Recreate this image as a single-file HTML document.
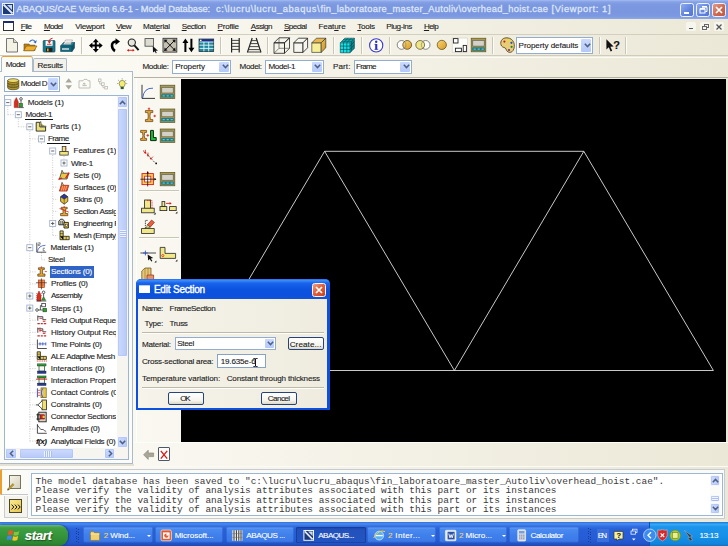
<!DOCTYPE html><html><head><meta charset="utf-8"><title>ABAQUS/CAE</title><style>
*{margin:0;padding:0;box-sizing:border-box}
html,body{width:728px;height:546px;overflow:hidden;background:#ebe8d7}
body{background:linear-gradient(90deg,#fdfcf7,#ebe8d7)}
body{position:relative;font-family:"Liberation Sans","DejaVu Sans",sans-serif;font-size:7.7px;color:#111;line-height:1}
.a{position:absolute;white-space:nowrap}
svg{position:absolute;overflow:visible}
.t{position:absolute;white-space:nowrap;font-size:8.1px;line-height:10px;height:10px;color:#1c1c1c;-webkit-text-stroke:.12px}
.tb{font-weight:bold}
.cb{position:absolute;background:#fff;border:1px solid #93add0}
.cbb{position:absolute;right:1px;top:1px;bottom:1px;width:10px;background:linear-gradient(#cbd9fd,#b4c8f8);border-radius:1px}
.btn{position:absolute;border:1px solid #27437c;border-radius:2px;background:linear-gradient(#ffffff,#f4f3ec 70%,#dcd8c8);}
.sep{position:absolute;width:1px;background:#c9c6b6;box-shadow:1px 0 0 #fcfcf8}
.sb{position:absolute;background:linear-gradient(90deg,#cddafd,#b7c9f8);border:1px solid #f4f7fe;border-radius:2px;box-shadow:0 0 0 .5px #a9bdf0 inset}
.sbh{position:absolute;background:linear-gradient(#cddafd,#b7c9f8);border:1px solid #f4f7fe;border-radius:2px;box-shadow:0 0 0 .5px #a9bdf0 inset}
</style></head><body>
<div class="a" style="left:0px;top:0px;width:728.0px;height:18.5px;background:linear-gradient(#a4bbf0 0%,#86a2e6 10%,#7b98e1 25%,#7a96df 60%,#7c98e0 85%,#8ea8e8 100%)"></div>
<svg style="left:2px;top:3px" width="12" height="12" viewBox="0 0 12 12"><rect width="12" height="12" fill="#eef2fa"/><rect x="1" y="1" width="10" height="10" fill="#1c3a78"/><path d="M1.5 1.5 L10.5 10.5" stroke="#e4ecfa" stroke-width="1.8"/><path d="M5 2 H10 V7 Z" fill="#c9d6f0"/></svg>
<span class="t " style="left:16.5px;top:4.6px;letter-spacing:-0.065px;font-size:9.3px;color:#dde6f9;line-height:12px;height:12px;-webkit-text-stroke:.3px #dde6f9;top:3.2px">ABAQUS/CAE Version 6.6-1 - Model Database:</span>
<span class="t " style="left:216.0px;top:4.6px;letter-spacing:0.597px;font-size:9.3px;color:#dde6f9;line-height:12px;height:12px;-webkit-text-stroke:.3px #dde6f9;top:3.2px">c:\lucru\lucru_abaqus\</span>
<span class="t " style="left:320.5px;top:4.6px;letter-spacing:0.304px;font-size:9.3px;color:#dde6f9;line-height:12px;height:12px;-webkit-text-stroke:.3px #dde6f9;top:3.2px">fin_laboratoare_master_Autoliv</span>
<span class="t " style="left:458.5px;top:4.6px;letter-spacing:0.320px;font-size:9.3px;color:#dde6f9;line-height:12px;height:12px;-webkit-text-stroke:.3px #dde6f9;top:3.2px">\overhead_hoist.cae</span>
<span class="t " style="left:551.5px;top:4.6px;letter-spacing:0.624px;font-size:9.3px;color:#dde6f9;line-height:12px;height:12px;-webkit-text-stroke:.3px #dde6f9;top:3.2px">[Viewport: 1]</span>
<div class="a" style="left:679.5px;top:2.5px;width:14.0px;height:14.0px;border:1px solid #eef2fc;border-radius:2.5px;background:linear-gradient(135deg,#8fabf0,#5f82dc 60%,#5577d4)"></div>
<div class="a" style="left:695.5px;top:2.5px;width:14.0px;height:14.0px;border:1px solid #eef2fc;border-radius:2.5px;background:linear-gradient(135deg,#8fabf0,#5f82dc 60%,#5577d4)"></div>
<div class="a" style="left:711.7px;top:2.5px;width:14.0px;height:14.0px;border:1px solid #eef2fc;border-radius:2.5px;background:linear-gradient(135deg,#e39a86,#cc664c 60%,#c05a42)"></div>
<div class="a" style="left:683.5px;top:11.5px;width:5.5px;height:2.0px;background:#fff"></div>
<svg style="left:698.5px;top:5px" width="9" height="9" viewBox="0 0 9 9"><path d="M3 2.2 H8 V6.5 H6.5 M3 1.5 H8" stroke="#fff" stroke-width="1" fill="none"/><rect x="1" y="4" width="5" height="4" fill="none" stroke="#fff"/><path d="M1 3.8 H6" stroke="#fff" stroke-width="1.4"/></svg>
<svg style="left:715px;top:5.5px" width="8" height="8" viewBox="0 0 8 8"><path d="M1 1 L7 7 M7 1 L1 7" stroke="#fff" stroke-width="1.7"/></svg>
<div class="a" style="left:0px;top:18.5px;width:728.0px;height:16.0px;background:transparent"></div>
<div class="a" style="left:3px;top:20.5px;width:11.0px;height:10.5px;border:1px solid #333;border-top:2.5px solid #1c2c70;background:#fff"></div>
<span class="t " style="left:20.8px;top:21.9px;letter-spacing:-0.621px;"><u>F</u>ile</span>
<span class="t " style="left:43.9px;top:21.9px;letter-spacing:-0.741px;"><u>M</u>odel</span>
<span class="t " style="left:75.2px;top:21.9px;letter-spacing:-0.254px;">Vie<u>w</u>port</span>
<span class="t " style="left:116.0px;top:21.9px;letter-spacing:-0.641px;"><u>V</u>iew</span>
<span class="t " style="left:143.0px;top:21.9px;letter-spacing:-0.259px;">Mat<u>e</u>rial</span>
<span class="t " style="left:181.7px;top:21.9px;letter-spacing:-0.453px;"><u>S</u>ection</span>
<span class="t " style="left:217.6px;top:21.9px;letter-spacing:-0.259px;"><u>P</u>rofile</span>
<span class="t " style="left:250.8px;top:21.9px;letter-spacing:-0.523px;"><u>A</u>ssign</span>
<span class="t " style="left:284.0px;top:21.9px;letter-spacing:-0.594px;"><u>S</u>pecial</span>
<span class="t " style="left:318.4px;top:21.9px;letter-spacing:-0.104px;">Feat<u>u</u>re</span>
<span class="t " style="left:357.3px;top:21.9px;letter-spacing:-0.302px;"><u>T</u>ools</span>
<span class="t " style="left:386.3px;top:21.9px;letter-spacing:-0.467px;">Plu<u>g</u>-ins</span>
<span class="t " style="left:423.9px;top:21.9px;letter-spacing:-0.624px;"><u>H</u>elp</span>
<div class="a" style="left:686px;top:22px;width:9.8px;height:9.0px;background:#f6f5ee;border-radius:1.5px"></div>
<div class="a" style="left:699.8px;top:22px;width:10.6px;height:9.0px;background:#f6f5ee;border-radius:1.5px"></div>
<div class="a" style="left:714px;top:22px;width:10.0px;height:9.0px;background:#f6f5ee;border-radius:1.5px"></div>
<div class="a" style="left:688.5px;top:27.6px;width:4.5px;height:1.6px;background:#5a5a5a"></div>
<div class="a" style="left:703.6px;top:23.6px;width:5.0px;height:4.0px;border:1px solid #666;border-top-width:1.6px"></div>
<div class="a" style="left:701.6px;top:25.6px;width:5.0px;height:4.0px;border:1px solid #666;border-top-width:1.6px;background:#f6f5ee"></div>
<svg style="left:716px;top:23.6px" width="6" height="6" viewBox="0 0 6 6"><path d="M.5 .5 L5.5 5.5 M5.5 .5 L.5 5.5" stroke="#555" stroke-width="1.3"/></svg>
<div class="a" style="left:0px;top:34.3px;width:728.0px;height:20.7px;border-top:1px solid #d2cfbf"></div>
<div class="a" style="left:0px;top:55px;width:728.0px;height:1.0px;background:#cfccbc"></div>
<div class="sep" style="left:81.1px;top:37px;height:16.5px"></div>
<div class="sep" style="left:220.2px;top:37px;height:16.5px"></div>
<div class="sep" style="left:267.0px;top:37px;height:16.5px"></div>
<div class="sep" style="left:332.9px;top:37px;height:16.5px"></div>
<div class="sep" style="left:361.3px;top:37px;height:16.5px"></div>
<div class="sep" style="left:388.9px;top:37px;height:16.5px"></div>
<div class="sep" style="left:492.2px;top:37px;height:16.5px"></div>
<div class="sep" style="left:598.8px;top:37px;height:16.5px"></div>
<div class="sep" style="left:625.2px;top:37px;height:16.5px"></div>
<svg style="left:0;top:0" width="728" height="60" viewBox="0 0 728 60"><path d="M6.5 38.5 H13.5 L17.5 42.5 V52 H6.5 Z" fill="#f3f2e4" stroke="#666" stroke-width=".9"/><path d="M13.5 38.5 V42.5 H17.5" fill="#d8d6c4" stroke="#666" stroke-width=".8"/><path d="M24 44 H29 L30 45.2 H35 V50.5 H24 Z" fill="#b88418" stroke="#6a4a10" stroke-width=".6"/><path d="M23.6 50.8 L26.5 46 H37 L34 50.8 Z" fill="#eeb030" stroke="#7a5410" stroke-width=".6"/><path d="M29.5 41.8 Q32.5 38.5 35.2 41.5" fill="none" stroke="#3468c8" stroke-width="1.1"/><path d="M36.8 40.3 L35.9 43.6 L33.3 42 Z" fill="#3468c8"/><rect x="43.2" y="40.5" width="11.8" height="11.5" rx=".8" fill="#157a90" stroke="#0d4a58" stroke-width=".7"/><rect x="45.6" y="40.8" width="7" height="5" fill="#fff"/><rect x="46" y="47.8" width="6.4" height="4" fill="#222"/><rect x="47" y="48.5" width="1.6" height="2.8" fill="#e0a020"/><path d="M52.5 38.3 Q50 38.3 49.2 40.8" stroke="#d01818" stroke-width="1" fill="none"/><path d="M47.6 41.2 L51 41 L49.4 43.8 Z" fill="#d01818"/><path d="M47 44.3 H51.5" stroke="#d01818" stroke-width=".8"/><path d="M60.6 46 L63.5 42.5 H74.5 L72 46 Z" fill="#1a86a0" stroke="#0d4a58" stroke-width=".6"/><path d="M60.6 46 H72 V51.5 H60.6 Z" fill="#126a80" stroke="#0d4a58" stroke-width=".6"/><path d="M72 46 L74.5 42.5 V48 L72 51.5 Z" fill="#0e5468" stroke="#0d4a58" stroke-width=".6"/><path d="M63.5 44.5 L65.5 40 H72.5 L70.5 44.5 Z" fill="#fff" stroke="#777" stroke-width=".5"/><path d="M65 43.4 H70.5 M65.6 42.2 H71" stroke="#888" stroke-width=".5"/><rect x="62" y="48.3" width="7" height="1.4" fill="#e8e8e8"/><path d="M95.8 38.8 L98.8 42.3 H96.8 V44.6 H99.2 V42.6 L102.7 45.6 L99.2 48.6 V46.6 H96.8 V49 H98.8 L95.8 52.4 L92.8 49 H94.8 V46.6 H92.4 V48.6 L89 45.6 L92.4 42.6 V44.6 H94.8 V42.3 H92.8 Z" fill="#000"/><path d="M117 41.5 Q111.5 41.5 112 46 Q112.3 49.5 115 51" fill="none" stroke="#000" stroke-width="2.6"/><path d="M115.5 38.3 L120 41.6 L115.5 45 Z" fill="#000"/><path d="M109.8 46 L114.5 46 L112 49.6Z" fill="#000" opacity="0"/><circle cx="131.8" cy="42.6" r="3.6" fill="#e6e4dc" stroke="#222" stroke-width="1.1"/><path d="M134.4 45.4 L138.6 50.2" stroke="#111" stroke-width="1.9"/><path d="M127.5 50.3 H134" stroke="#e01818" stroke-width=".9"/><path d="M127 50.3 L129 48.9 V51.7 Z M134.6 50.3 L132.6 48.9 V51.7Z" fill="#e01818"/><rect x="145" y="38.6" width="8.6" height="7.6" fill="#dedcd0" stroke="#444" stroke-width=".8"/><path d="M152.8 46 L158 50.8 L155.6 50.7 L156.8 52.9 L155.8 53.3 L154.7 51.2 L153 52.6 Z" fill="#111"/><rect x="163" y="38.3" width="13.8" height="13.8" fill="#c4c1b2" stroke="#333" stroke-width=".9"/><path d="M164.8 40 L175 50.4 M175 40 L164.8 50.4" stroke="#111" stroke-width="1"/><path d="M164.2 39.5 L167.6 39.8 L164.6 42.9Z M175.6 39.5 L172.2 39.8 L175.2 42.9Z M164.2 50.9 L167.6 50.6 L164.6 47.5Z M175.6 50.9 L172.2 50.6 L175.2 47.5Z" fill="#111"/><path d="M185.4 38.5 L188.4 43 H186.4 V52 H184.4 V43 H182.4 Z M191.4 52.3 L194.4 47.8 H192.4 V38.8 H190.4 V47.8 H188.4 Z" fill="#000"/><rect x="199" y="39" width="14.7" height="12.6" fill="#1c8aa0" stroke="#222" stroke-width=".7"/><rect x="199.4" y="39.3" width="14" height="2.4" fill="#1c2c88"/><path d="M199.5 42 H213.5 M199.5 45.2 H213.5 M199.5 48.4 H213.5 M203.9 42 V51.4 M208.7 42 V51.4" stroke="#e8f4f8" stroke-width=".9"/><rect x="200" y="39.7" width="1.5" height="1.3" fill="#fff"/><path d="M231.6 38 V52.4 M239.2 38 V52.4" stroke="#222" stroke-width="1.2"/><path d="M231.6 40.4 H239.2 M231.6 43.4 H239.2 M231.6 46.4 H239.2 M231.6 49.4 H239.2" stroke="#333" stroke-width=".9"/><path d="M252.2 38 L247.4 52.4 M256.2 38 L261 52.4" stroke="#222" stroke-width="1.2"/><path d="M251.5 40.6 H257 M250.5 43.6 H258 M249.5 46.6 H259 M248.4 49.6 H260 M247.4 52 H261" stroke="#333" stroke-width=".9"/><path d="M274 42.8 H284.5 V53.3 H274 Z" fill="none" stroke="#222" stroke-width="0.8"/><path d="M274 42.8 L279 37.8 H289.5 L284.5 42.8 Z" fill="none" stroke="#222" stroke-width="0.8"/><path d="M284.5 42.8 L289.5 37.8 V48.3 L284.5 53.3 Z" fill="none" stroke="#222" stroke-width="0.8"/><path d="M279 37.8 V48.3 H289.5 M279 48.3 L274 53.3" fill="none" stroke="#444" stroke-width="0.6400000000000001"/><path d="M293.8 42.800000000000004 H303.0 V52.400000000000006 H293.8 Z" fill="#f6f5ee" stroke="#222" stroke-width="0.8"/><path d="M293.8 42.800000000000004 L298.40000000000003 38.2 H307.6 L303.0 42.800000000000004 Z" fill="#f6f5ee" stroke="#222" stroke-width="0.8"/><path d="M303.0 42.800000000000004 L307.6 38.2 V47.800000000000004 L303.0 52.400000000000006 Z" fill="#f6f5ee" stroke="#222" stroke-width="0.8"/><defs><linearGradient id="gs" x1="0" y1="0" x2="1" y2="1"><stop offset="0" stop-color="#f0c860"/><stop offset="1" stop-color="#c08a20"/></linearGradient></defs><path d="M311.8 42.800000000000004 H321.2 V52.400000000000006 H311.8 Z" fill="#f6ee98" stroke="#222" stroke-width="0.6"/><path d="M311.8 42.800000000000004 L316.40000000000003 38.2 H325.8 L321.2 42.800000000000004 Z" fill="#e8b850" stroke="#222" stroke-width="0.6"/><path d="M321.2 42.800000000000004 L325.8 38.2 V47.800000000000004 L321.2 52.400000000000006 Z" fill="url(#gs)" stroke="#222" stroke-width="0.6"/><path d="M340.3 42.8 H350 V52.8 H340.3 Z" fill="#10e0e8"/><path d="M340.3 42.8 L344.8 38.2 H354.4 L350 42.8Z" fill="#10c8d0"/><path d="M350 42.8 L354.4 38.2 V48.2 L350 52.8Z" fill="#0ca8b0"/><path d="M340.3 42.8 H350 V52.8 H340.3 Z M340.3 46.1 H350 M340.3 49.4 H350 M343.5 42.8 V52.8 M346.8 42.8 V52.8 M340.3 42.8 L344.8 38.2 H354.4 L350 42.8 M343.5 42.8 L348 38.2 M346.8 42.8 L351.2 38.2 M341.8 41.3 H351.5 M343.3 39.7 H353 M354.4 38.2 V48.2 L350 52.8 M351.5 41.3 V51.3 M353 39.7 V49.7 M350 46.1 L354.4 41.5 M350 49.4 L354.4 44.8" fill="none" stroke="#063c40" stroke-width=".6"/><circle cx="376.2" cy="45.4" r="6.6" fill="#fff" stroke="#3838c8" stroke-width="1.1"/><rect x="375.2" y="44" width="2.1" height="5.6" fill="#3030c0"/><circle cx="376.2" cy="41.7" r="1.2" fill="#3030c0"/><path d="M374.4 44.3 H376 M374.4 49.4 H378.2" stroke="#3030c0" stroke-width=".7"/><defs><linearGradient id="go" x1="0" y1="0" x2="1" y2="1"><stop offset="0" stop-color="#f8d878"/><stop offset="1" stop-color="#d89820"/></linearGradient></defs><circle cx="401.6" cy="44.9" r="4.4" fill="#fdfdfb" stroke="#555" stroke-width=".7"/><circle cx="407.2" cy="44.9" r="4.4" fill="url(#go)" stroke="#4a3a10" stroke-width=".7"/><path d="M404.4 41.5 A4.4 4.4 0 0 1 404.4 48.3" fill="none" stroke="#777" stroke-width=".6"/><circle cx="425.6" cy="44.9" r="4.4" fill="#fdfdfb" stroke="#555" stroke-width=".7"/><circle cx="420.2" cy="44.9" r="4.4" fill="#f0e488" stroke="#4a4420" stroke-width=".7"/><path d="M422.9 41.5 A4.4 4.4 0 0 0 422.9 48.3" fill="none" stroke="#777" stroke-width=".6"/><circle cx="441.8" cy="44.9" r="4.6" fill="url(#go)" stroke="#5a4210" stroke-width=".7"/><rect x="452.2" y="38" width="15.4" height="14.2" fill="#fcfcf8" stroke="#d0cec0" stroke-width=".6"/><rect x="453.4" y="38.6" width="4.6" height="4.4" fill="#fff" stroke="#222" stroke-width=".9"/><rect x="455.4" y="48.2" width="6" height="3.4" fill="#fff" stroke="#222" stroke-width=".9"/><rect x="463.2" y="45.4" width="3.2" height="6.2" fill="#fff" stroke="#222" stroke-width=".9"/><rect x="471.2" y="38.2" width="14.6" height="13.6" fill="#a89a48" stroke="#5a5228" stroke-width=".7"/><rect x="472.8" y="40.400000000000006" width="11.399999999999999" height="5.7" fill="#d4d2c8" stroke="#555" stroke-width=".6"/><rect x="472.2" y="47.4" width="12.6" height="3.3" fill="#1a7a88"/><path d="M473.59999999999997 49.1 h2.2 m1.8 0 h2.2 m1.8 0 h2.2" stroke="#9ad8e0" stroke-width=".9"/><path d="M507 37.8 C501 37.6 499.6 43 501.6 46 C503 48 505.4 47 506 49 C506.8 52.6 511 53.6 513 50.6 C516 46 514 38 507 37.8 Z" fill="#e8cc78" stroke="#4a3a10" stroke-width=".8"/><circle cx="504.4" cy="41.6" r="1.1" fill="#c02020"/><circle cx="508.2" cy="40.4" r="1.1" fill="#e8e020"/><circle cx="511.4" cy="42.8" r="1.1" fill="#2050c0"/><circle cx="511.6" cy="46.8" r="1.1" fill="#208040"/><circle cx="509" cy="50" r="1.1" fill="#703090"/><path d="M606.4 39.2 L606.4 49.4 L608.8 47.2 L610.6 51.4 L612.2 50.7 L610.4 46.7 L613.6 46.5 Z" fill="#111"/></svg>
<span class="t " style="left:613.2px;top:40.9px;font-size:11px;font-weight:bold;color:#111;line-height:12px;height:12px;top:39.4px">?</span>
<div class="cb" style="left:516.4px;top:36.6px;width:77.0px;height:17.4px"><div class="cbb" style="width:10px"></div></div>
<span class="t " style="left:518.6px;top:40.8px;letter-spacing:-0.087px;">Property defaults</span>
<svg style="left:583.9px;top:43.099999999999994px" width="7" height="5" viewBox="0 0 7 5"><path d="M0.8 0.8 L3.5 3.6 L6.2 0.8" fill="none" stroke="#4d6185" stroke-width="1.5"/></svg>
<div class="a" style="left:136.5px;top:56.5px;width:591.5px;height:20.5px;background:transparent;border-top:1px solid #fbfaf4;border-left:1px solid #fbfaf4"></div>
<div class="a" style="left:134px;top:77px;width:594.0px;height:1.0px;background:#b4b1a2"></div>
<span class="t " style="left:142.4px;top:61.9px;letter-spacing:-0.366px;">Module:</span>
<div class="cb" style="left:172.4px;top:59.5px;width:58.599999999999994px;height:14.0px"><div class="cbb" style="width:10px"></div></div>
<span class="t " style="left:175.3px;top:62.0px;letter-spacing:-0.128px;">Property</span>
<svg style="left:221.5px;top:64.3px" width="7" height="5" viewBox="0 0 7 5"><path d="M0.8 0.8 L3.5 3.6 L6.2 0.8" fill="none" stroke="#4d6185" stroke-width="1.5"/></svg>
<span class="t " style="left:239.6px;top:61.9px;letter-spacing:-0.399px;">Model:</span>
<div class="cb" style="left:265px;top:59.5px;width:58.69999999999999px;height:14.0px"><div class="cbb" style="width:10px"></div></div>
<span class="t " style="left:268.4px;top:62.0px;letter-spacing:-0.342px;">Model-1</span>
<svg style="left:314.2px;top:64.3px" width="7" height="5" viewBox="0 0 7 5"><path d="M0.8 0.8 L3.5 3.6 L6.2 0.8" fill="none" stroke="#4d6185" stroke-width="1.5"/></svg>
<span class="t " style="left:333.0px;top:61.9px;letter-spacing:0.077px;">Part:</span>
<div class="cb" style="left:353.7px;top:59.5px;width:58.30000000000001px;height:14.0px"><div class="cbb" style="width:10px"></div></div>
<span class="t " style="left:356.0px;top:62.0px;letter-spacing:-0.748px;">Frame</span>
<svg style="left:402.5px;top:64.3px" width="7" height="5" viewBox="0 0 7 5"><path d="M0.8 0.8 L3.5 3.6 L6.2 0.8" fill="none" stroke="#4d6185" stroke-width="1.5"/></svg>
<div class="a" style="left:0px;top:71px;width:132.5px;height:393.0px;background:#fbfbf8;border:1px solid #adbaca;border-left:none"></div>
<div class="a" style="left:0px;top:464px;width:134.0px;height:2.0px;background:#e4e2d6"></div>
<div class="a" style="left:33px;top:58.2px;width:34.3px;height:13.3px;background:#f3f2ea;border:1px solid #adbaca;border-bottom:none;border-radius:2px 2px 0 0"></div>
<div class="a" style="left:0.8px;top:56px;width:32.2px;height:16.0px;background:#fbfbf8;border:1px solid #adbaca;border-bottom:none;border-top:1.6px solid #e8a030;border-radius:2.5px 2.5px 0 0"></div>
<span class="t " style="left:5.8px;top:60.3px;letter-spacing:-0.562px;">Model</span>
<span class="t " style="left:37.5px;top:60.9px;letter-spacing:-0.250px;">Results</span>
<div class="cb" style="left:4.2px;top:75.5px;width:55.4px;height:16px"><div class="cbb" style="width:9.4px"></div></div>
<span class="t " style="left:20.8px;top:79.1px;letter-spacing:-0.540px;">Model D</span>
<svg style="left:50px;top:81.6px" width="7" height="5" viewBox="0 0 7 5"><path d="M0.8 0.8 L3.5 3.6 L6.2 0.8" fill="none" stroke="#4d6185" stroke-width="1.5"/></svg>
<svg style="left:0;top:0" width="140" height="100" viewBox="0 0 140 100"><path d="M7.6 85.8 v2 a5.6 1.9 0 0 0 11.2 0 v-2 Z" fill="#b89a28" stroke="#3a3210" stroke-width=".6"/><ellipse cx="13.2" cy="85.8" rx="5.6" ry="1.9" fill="#ecd868" stroke="#3a3210" stroke-width=".6"/><path d="M7.6 83.2 v2 a5.6 1.9 0 0 0 11.2 0 v-2 Z" fill="#b89a28" stroke="#3a3210" stroke-width=".6"/><ellipse cx="13.2" cy="83.2" rx="5.6" ry="1.9" fill="#ecd868" stroke="#3a3210" stroke-width=".6"/><path d="M7.6 80.6 v2 a5.6 1.9 0 0 0 11.2 0 v-2 Z" fill="#b89a28" stroke="#3a3210" stroke-width=".6"/><ellipse cx="13.2" cy="80.6" rx="5.6" ry="1.9" fill="#ecd868" stroke="#3a3210" stroke-width=".6"/><path d="M68.7 78.2 L72 82.4 H65.4 Z M68.7 89.4 L72 85.2 H65.4 Z" fill="#aaa89c"/><path d="M79 80.8 H83 L84 79.4 H87 L88 80.8 H90 V88 H79 Z" fill="none" stroke="#b4b2a6" stroke-width=".8"/><path d="M82.4 85.6 H86.8 M84.2 83.2 V85.6 M82.8 84.4 L84.2 82.8 L85.6 84.4" stroke="#b4b2a6" stroke-width=".8" fill="none"/><rect x="98.4" y="79" width="2.6" height="2.6" fill="none" stroke="#b4b2a6" stroke-width=".7"/><rect x="101.6" y="82.8" width="2.6" height="2.6" fill="none" stroke="#b4b2a6" stroke-width=".7"/><rect x="104.8" y="86.4" width="2.6" height="2.6" fill="none" stroke="#b4b2a6" stroke-width=".7"/><path d="M99.7 81.6 V84 H101.6 M102.9 85.4 V87.7 H104.8" stroke="#b4b2a6" stroke-width=".7" fill="none"/><path d="M122.2 80.4 a3.1 3.1 0 0 1 3.1 3.1 c0 1.6 -1.2 2 -1.4 3.4 h-3.4 c-.2 -1.4 -1.4 -1.8 -1.4 -3.4 a3.1 3.1 0 0 1 3.1 -3.1 Z" fill="#f4ec70" stroke="#5a5a30" stroke-width=".6"/><rect x="120.7" y="86.9" width="3" height="2.2" fill="#2a5a2a"/><path d="M122.2 78.4 v1 M118.2 80 l.8 .8 M126.2 80 l-.8 .8 M117.2 83.6 h1 M126.2 83.6 h1" stroke="#3a6a3a" stroke-width=".6"/></svg>
<div class="a" style="left:4.2px;top:95.2px;width:125.2px;height:365.0px;background:#fff;border:1px solid #9db5d4"></div>
<div class="a" style="left:116.8px;top:96.2px;width:11.6px;height:351.4px;background:#f6f5f0"></div>
<div class="sb" style="left:116.8px;top:96.2px;width:11.6px;height:11.6px"></div>
<div class="sb" style="left:116.8px;top:108px;width:11.6px;height:249px"></div>
<div class="sb" style="left:116.8px;top:436.2px;width:11.6px;height:11.4px"></div>
<svg style="left:119.1px;top:99.6px" width="7" height="5" viewBox="0 0 7 5"><path d="M0.8 4.2 L3.5 1.4 L6.2 4.2" fill="none" stroke="#4d6185" stroke-width="1.5"/></svg>
<svg style="left:119.1px;top:440px" width="7" height="5" viewBox="0 0 7 5"><path d="M0.8 0.8 L3.5 3.6 L6.2 0.8" fill="none" stroke="#4d6185" stroke-width="1.5"/></svg>
<div class="a" style="left:119.6px;top:229.5px;width:6.0px;height:1.0px;background:#eef3fe;box-shadow:0 .6px 0 #9fb4ec"></div>
<div class="a" style="left:119.6px;top:231.5px;width:6.0px;height:1.0px;background:#eef3fe;box-shadow:0 .6px 0 #9fb4ec"></div>
<div class="a" style="left:119.6px;top:233.5px;width:6.0px;height:1.0px;background:#eef3fe;box-shadow:0 .6px 0 #9fb4ec"></div>
<div class="a" style="left:119.6px;top:235.5px;width:6.0px;height:1.0px;background:#eef3fe;box-shadow:0 .6px 0 #9fb4ec"></div>
<div class="a" style="left:5.2px;top:448.2px;width:123.2px;height:11.2px;background:#f6f5f0"></div>
<div class="sbh" style="left:5.2px;top:448.2px;width:11.6px;height:11.2px"></div>
<div class="sbh" style="left:19px;top:448.2px;width:55.4px;height:11.2px"></div>
<div class="sbh" style="left:103.8px;top:448.2px;width:11.6px;height:11.2px"></div>
<svg style="left:8.6px;top:450.3px" width="5" height="7" viewBox="0 0 5 7"><path d="M4.2 0.8 L1.4 3.5 L4.2 6.2" fill="none" stroke="#4d6185" stroke-width="1.5"/></svg>
<svg style="left:107.6px;top:450.3px" width="5" height="7" viewBox="0 0 5 7"><path d="M0.8 0.8 L3.6 3.5 L0.8 6.2" fill="none" stroke="#4d6185" stroke-width="1.5"/></svg>
<div class="a" style="left:43.5px;top:451.2px;width:1.0px;height:5.4px;background:#eef3fe;box-shadow:.6px 0 0 #9fb4ec"></div>
<div class="a" style="left:45.5px;top:451.2px;width:1.0px;height:5.4px;background:#eef3fe;box-shadow:.6px 0 0 #9fb4ec"></div>
<div class="a" style="left:47.5px;top:451.2px;width:1.0px;height:5.4px;background:#eef3fe;box-shadow:.6px 0 0 #9fb4ec"></div>
<div class="a" style="left:49.5px;top:451.2px;width:1.0px;height:5.4px;background:#eef3fe;box-shadow:.6px 0 0 #9fb4ec"></div>
<div class="a" style="left:5.2px;top:96.2px;width:111.2px;height:351.4px;overflow:hidden">
<span class="t " style="left:22.6px;top:1.9px;letter-spacing:-0.226px;">Models (1)</span>
<span class="t " style="left:20.2px;top:14.0px;letter-spacing:-0.358px;">Model-1</span>
<div class="a" style="left:19.8px;top:22.89px;width:28.1px;height:1.1px;background:#111"></div>
<span class="t " style="left:45.3px;top:26.1px;letter-spacing:-0.068px;">Parts (1)</span>
<span class="t " style="left:42.7px;top:38.2px;letter-spacing:-0.473px;">Frame</span>
<div class="a" style="left:42.3px;top:47.06999999999998px;width:22.5px;height:1.1px;background:#111"></div>
<span class="t " style="left:68.4px;top:50.3px;letter-spacing:-0.099px;">Features (1)</span>
<span class="t " style="left:65.7px;top:62.4px;letter-spacing:-0.289px;">Wire-1</span>
<span class="t " style="left:68.4px;top:74.4px;letter-spacing:-0.135px;">Sets (0)</span>
<span class="t " style="left:68.4px;top:86.5px;letter-spacing:-0.081px;">Surfaces (0)</span>
<span class="t " style="left:68.4px;top:98.6px;letter-spacing:-0.317px;">Skins (0)</span>
<span class="t " style="left:68.4px;top:110.7px;letter-spacing:-0.372px;">Section Assignments</span>
<span class="t " style="left:68.4px;top:122.8px;letter-spacing:-0.400px;">Engineering Features</span>
<span class="t " style="left:68.4px;top:134.9px;letter-spacing:-0.529px;">Mesh (Empty)</span>
<span class="t " style="left:45.3px;top:147.0px;letter-spacing:-0.124px;">Materials (1)</span>
<span class="t " style="left:42.7px;top:159.1px;letter-spacing:-0.338px;">Steel</span>
<div class="a" style="left:44.5px;top:170.10000000000002px;width:44.5px;height:11.5px;background:#2f63c6"></div>
<span class="t " style="left:45.8px;top:171.2px;letter-spacing:-0.181px;color:#fff">Sections (0)</span>
<span class="t " style="left:45.8px;top:183.2px;letter-spacing:-0.195px;">Profiles (0)</span>
<span class="t " style="left:45.8px;top:195.3px;letter-spacing:-0.513px;">Assembly</span>
<span class="t " style="left:45.8px;top:207.4px;letter-spacing:-0.168px;">Steps (1)</span>
<span class="t " style="left:45.8px;top:219.5px;letter-spacing:-0.306px;">Field Output Requests</span>
<span class="t " style="left:45.8px;top:231.6px;letter-spacing:-0.146px;">History Output Requests</span>
<span class="t " style="left:45.5px;top:243.7px;letter-spacing:-0.241px;">Time Points (0)</span>
<span class="t " style="left:45.5px;top:255.8px;letter-spacing:-0.384px;">ALE Adaptive Mesh Constraints</span>
<span class="t " style="left:45.5px;top:267.9px;letter-spacing:0.008px;">Interactions (0)</span>
<span class="t " style="left:45.5px;top:280.0px;letter-spacing:-0.083px;">Interaction Properties</span>
<span class="t " style="left:45.5px;top:292.1px;letter-spacing:-0.143px;">Contact Controls (0)</span>
<span class="t " style="left:45.5px;top:304.2px;letter-spacing:-0.127px;">Constraints (0)</span>
<span class="t " style="left:45.5px;top:316.2px;letter-spacing:-0.302px;">Connector Sections</span>
<span class="t " style="left:45.5px;top:328.3px;letter-spacing:-0.222px;">Amplitudes (0)</span>
<span class="t " style="left:45.5px;top:340.4px;letter-spacing:-0.281px;">Analytical Fields (0)</span>
<span class="t " style="left:30.7px;top:340.4px;letter-spacing:-0.498px;font-style:italic;font-weight:bold;color:#111">f(x)</span>
<svg style="left:0;top:0" width="112" height="352" viewBox="5.2 96.2 112 352"><path d="M8 106.8 V114.9" stroke="#c4c4c4" stroke-width=".9" stroke-dasharray="1 1.4"/><path d="M8 114.9 H15" stroke="#c4c4c4" stroke-width=".9" stroke-dasharray="1 1.4"/><path d="M30 131.0 V441.3" stroke="#c4c4c4" stroke-width=".9" stroke-dasharray="1 1.4"/><path d="M18.5 118.9 V127.0" stroke="#c4c4c4" stroke-width=".9" stroke-dasharray="1 1.4"/><path d="M18.5 127.0 H27" stroke="#c4c4c4" stroke-width=".9" stroke-dasharray="1 1.4"/><path d="M41.7 143.1 V145.1" stroke="#c4c4c4" stroke-width=".9" stroke-dasharray="1 1.4"/><path d="M52.9 155.2 V235.8" stroke="#c4c4c4" stroke-width=".9" stroke-dasharray="1 1.4"/><path d="M64.2 156.2 V160.2" stroke="#c4c4c4" stroke-width=".9" stroke-dasharray="1 1.4"/><path d="M30 139.1 H38" stroke="#c4c4c4" stroke-width=".9" stroke-dasharray="1 1.4"/><path d="M53 175.3 H58" stroke="#c4c4c4" stroke-width=".9" stroke-dasharray="1 1.4"/><path d="M53 187.4 H58" stroke="#c4c4c4" stroke-width=".9" stroke-dasharray="1 1.4"/><path d="M53 199.5 H58" stroke="#c4c4c4" stroke-width=".9" stroke-dasharray="1 1.4"/><path d="M53 211.6 H58" stroke="#c4c4c4" stroke-width=".9" stroke-dasharray="1 1.4"/><path d="M53 235.8 H58" stroke="#c4c4c4" stroke-width=".9" stroke-dasharray="1 1.4"/><path d="M41.7 252.9 V260.0" stroke="#c4c4c4" stroke-width=".9" stroke-dasharray="1 1.4"/><path d="M41.7 260.0 H46" stroke="#c4c4c4" stroke-width=".9" stroke-dasharray="1 1.4"/><path d="M30 272.1 H36" stroke="#c4c4c4" stroke-width=".9" stroke-dasharray="1 1.4"/><path d="M30 284.1 H36" stroke="#c4c4c4" stroke-width=".9" stroke-dasharray="1 1.4"/><path d="M30 320.4 H36" stroke="#c4c4c4" stroke-width=".9" stroke-dasharray="1 1.4"/><path d="M30 332.5 H36" stroke="#c4c4c4" stroke-width=".9" stroke-dasharray="1 1.4"/><path d="M30 344.6 H36" stroke="#c4c4c4" stroke-width=".9" stroke-dasharray="1 1.4"/><path d="M30 356.7 H36" stroke="#c4c4c4" stroke-width=".9" stroke-dasharray="1 1.4"/><path d="M30 368.8 H36" stroke="#c4c4c4" stroke-width=".9" stroke-dasharray="1 1.4"/><path d="M30 380.9 H36" stroke="#c4c4c4" stroke-width=".9" stroke-dasharray="1 1.4"/><path d="M30 393.0 H36" stroke="#c4c4c4" stroke-width=".9" stroke-dasharray="1 1.4"/><path d="M30 405.1 H36" stroke="#c4c4c4" stroke-width=".9" stroke-dasharray="1 1.4"/><path d="M30 417.1 H36" stroke="#c4c4c4" stroke-width=".9" stroke-dasharray="1 1.4"/><path d="M30 429.2 H36" stroke="#c4c4c4" stroke-width=".9" stroke-dasharray="1 1.4"/><path d="M30 441.3 H36" stroke="#c4c4c4" stroke-width=".9" stroke-dasharray="1 1.4"/><rect x="5" y="99.8" width="6" height="6" fill="#fff" stroke="#a4b4cc" stroke-width=".9"/><path d="M6.4 102.8 h3.2" stroke="#555" stroke-width=".9"/><path d="M14.5 107.8 V102.3 L16.5 97.8 L18.5 102.3 V107.8 Z" fill="#d83020" stroke="#801810" stroke-width=".5"/><path d="M14 100.3 h1.4 M14 102.3 h1.4 M14 104.3 h1.4 M14 106.3 h1.4" stroke="#d83020" stroke-width=".5"/><rect x="19.4" y="103.5" width="3.4" height="3.6" fill="#30a030" stroke="#184818" stroke-width=".5"/><path d="M21.2 103.3 V100.1" stroke="#222" stroke-width=".7"/><circle cx="21.2" cy="99.1" r="1.3" fill="#fff" stroke="#222" stroke-width=".7"/><path d="M18.6 107.8 H24" stroke="#222" stroke-width=".7"/><rect x="15.5" y="111.9" width="6" height="6" fill="#fff" stroke="#a4b4cc" stroke-width=".9"/><path d="M16.9 114.9 h3.2" stroke="#555" stroke-width=".9"/><rect x="27" y="124.0" width="6" height="6" fill="#fff" stroke="#a4b4cc" stroke-width=".9"/><path d="M28.4 127.0 h3.2" stroke="#555" stroke-width=".9"/><path d="M36.4 122.5 H40.0 V127.1 H45.8 V131.3 H36.4 Z" fill="#ece078" stroke="#222" stroke-width=".9"/><path d="M40.0 122.5 L41.199999999999996 121.7 V126.3 H46.4 L45.8 127.1" fill="#b8a840" stroke="#222" stroke-width=".5"/><rect x="38.7" y="136.1" width="6" height="6" fill="#fff" stroke="#a4b4cc" stroke-width=".9"/><path d="M40.1 139.1 h3.2" stroke="#555" stroke-width=".9"/><rect x="49.9" y="148.2" width="6" height="6" fill="#fff" stroke="#a4b4cc" stroke-width=".9"/><path d="M51.3 151.2 h3.2" stroke="#555" stroke-width=".9"/><rect x="62.4" y="146.7" width="3.6" height="5" fill="#f0e480" stroke="#222" stroke-width=".7"/><rect x="60.0" y="151.7" width="8.4" height="3.6" fill="#f0e480" stroke="#222" stroke-width=".7"/><path d="M66.2 146.5 V150.7" stroke="#e02020" stroke-width=".7" stroke-dasharray="1 .6"/><rect x="61.2" y="160.2" width="6" height="6" fill="#fff" stroke="#a4b4cc" stroke-width=".9"/><path d="M62.6 163.2 h3.2" stroke="#555" stroke-width=".9"/><path d="M64.2 161.7 v3.2" stroke="#555" stroke-width=".9"/><path d="M59.6 179.20000000000002 L61.4 173.4 H69.0 L67.2 179.20000000000002 Z" fill="#e8c848" stroke="#222" stroke-width=".7"/><path d="M61.4 173.4 L62.199999999999996 170.4 L63.8 173.4" fill="#e8c848" stroke="#222" stroke-width=".6"/><path d="M58.6 179.60000000000002 L62.4 178.20000000000002 M65.8 178.4 L69.4 172.8" stroke="#e01818" stroke-width="1.3"/><path d="M59.6 191.3 L61.4 185.5 H69.0 L67.2 191.3 Z" fill="#e85828" stroke="#a02010" stroke-width=".7"/><path d="M61.4 185.5 L62.199999999999996 182.5 L63.8 185.5" fill="#e8c848" stroke="#222" stroke-width=".6"/><path d="M61.4 190.9 L63.0 186.1 M63.4 190.9 L65.0 186.1 M65.4 190.9 L67.0 186.1" stroke="#f8d8a0" stroke-width=".6"/><path d="M64.4 194.4 L68.0 197.0 V201.6 L64.4 204.4 L60.8 201.6 V197.0 Z" fill="#e8c030" stroke="#222" stroke-width=".7"/><path d="M64.4 194.4 L68.0 197.0 L64.4 199.4 L60.8 197.0 Z" fill="#2838a0" stroke="#222" stroke-width=".5"/><path d="M64.4 199.4 V204.4" stroke="#222" stroke-width=".5"/><path d="M61.4 207.5 H67.4 V209.1 H65.6 V213.7 H68.0 V215.9 H60.8 V213.7 H63.199999999999996 V209.1 H61.4 Z" fill="#e8a838" stroke="#5a3a10" stroke-width=".7"/><path d="M59.8 208.7 L69.0 212.29999999999998 M64.4 206.1 V208.1" stroke="#e01818" stroke-width=".8"/><rect x="49.9" y="220.7" width="6" height="6" fill="#fff" stroke="#a4b4cc" stroke-width=".9"/><path d="M51.3 223.7 h3.2" stroke="#555" stroke-width=".9"/><path d="M52.9 222.1 v3.2" stroke="#555" stroke-width=".9"/><path d="M59.0 225.0 V221.39999999999998 L60.800000000000004 219.39999999999998 H63.0 L64.6 221.39999999999998 V225.0 Z" fill="#d8d4c0" stroke="#222" stroke-width=".9"/><path d="M61.0 221.2 V224.79999999999998 M62.800000000000004 221.2 V224.79999999999998" stroke="#222" stroke-width=".6"/><path d="M64.2 222.6 H68.6 V228.2 H64.2 Z" fill="#e8c840" stroke="#222" stroke-width=".9"/><rect x="65.6" y="224.39999999999998" width="1.8" height="2" fill="#fff" stroke="#222" stroke-width=".5"/><path d="M60.199999999999996 231.10000000000002 H63.4 V236.5 H69.4 V239.9 H60.199999999999996 Z" fill="#e8d050" stroke="#222" stroke-width=".8"/><path d="M60.199999999999996 233.9 H63.4 M60.199999999999996 236.5 H63.4 V239.9 M66.4 236.5 V239.9" stroke="#222" stroke-width=".6"/><rect x="27" y="244.9" width="6" height="6" fill="#fff" stroke="#a4b4cc" stroke-width=".9"/><path d="M28.4 247.9 h3.2" stroke="#555" stroke-width=".9"/><path d="M37 242.8 V252.4 H46.4" fill="none" stroke="#222" stroke-width=".8"/><path d="M37.4 252.0 Q39 245.4 45.6 245.6" fill="none" stroke="#3858c8" stroke-width=".8"/><path d="M38.4 243.0 H40.4 V244.4 H38.4 V245.8 H40.4 M45.2 248.4 H43.4 V251.0 H45.2" fill="none" stroke="#222" stroke-width=".5"/><path d="M38.6 268.0 H44.6 V269.6 H42.800000000000004 V274.20000000000005 H45.2 V276.40000000000003 H38.0 V274.20000000000005 H40.4 V269.6 H38.6 Z" fill="#e8a838" stroke="#5a3a10" stroke-width=".7"/><path d="M41.6 266.6 V268.8 M45.0 271.8 H47.0" stroke="#e01818" stroke-width=".8"/><rect x="38.6" y="280.20000000000005" width="6" height="7.4" fill="#f0b060" stroke="#c03010" stroke-width=".7"/><path d="M41.6 278.6 V289.6 M36.2 283.0 H47.0" stroke="#222" stroke-width=".7"/><path d="M38.6 282.6 H44.6 M38.6 285.20000000000005 H44.6 M40.2 280.20000000000005 V287.6 M43.0 280.20000000000005 V287.6" stroke="#c03010" stroke-width=".5"/><rect x="27" y="293.2" width="6" height="6" fill="#fff" stroke="#a4b4cc" stroke-width=".9"/><path d="M28.4 296.2 h3.2" stroke="#555" stroke-width=".9"/><path d="M30 294.6 v3.2" stroke="#555" stroke-width=".9"/><path d="M37.2 301.2 V295.7 L39.2 291.2 L41.2 295.7 V301.2 Z" fill="#d83020" stroke="#801810" stroke-width=".5"/><path d="M36.2 293.7 h1.4 M36.2 295.7 h1.4 M36.2 297.7 h1.4 M36.2 299.7 h1.4 M40.800000000000004 293.7 h1.4 M40.800000000000004 295.7 h1.4" stroke="#d83020" stroke-width=".5"/><path d="M41.800000000000004 300.5 L43.800000000000004 296.7 L45.800000000000004 300.5 Z" fill="#30a030" stroke="#184818" stroke-width=".5"/><path d="M43.800000000000004 296.7 V293.5" stroke="#222" stroke-width=".7"/><circle cx="43.800000000000004" cy="292.5" r="1.3" fill="#fff" stroke="#222" stroke-width=".7"/><path d="M36.6 301.3 H46.6" stroke="#222" stroke-width=".6"/><rect x="27" y="305.3" width="6" height="6" fill="#fff" stroke="#a4b4cc" stroke-width=".9"/><path d="M28.4 308.3 h3.2" stroke="#555" stroke-width=".9"/><path d="M30 306.7 v3.2" stroke="#555" stroke-width=".9"/><circle cx="37.2" cy="310.2" r="1.3" fill="#fff" stroke="#222" stroke-width=".7"/><path d="M38.4 310.2 H40.6 V305.8 H42.6" fill="none" stroke="#222" stroke-width=".7"/><rect x="42.0" y="303.6" width="3.8" height="3.4" fill="#fff" stroke="#222" stroke-width=".7"/><path d="M40.6 310.2 H43.6" stroke="#222" stroke-width=".7"/><rect x="43.2" y="308.6" width="3.6" height="3.4" fill="#30a030" stroke="#184818" stroke-width=".6"/><path d="M38.0 315.7 V320.9 M38.0 316.9 H43.0 V319.9 H46.400000000000006" fill="none" stroke="#222" stroke-width=".8"/><path d="M39.6 318.5 H42.2 M43.0 321.5 H45.6" stroke="#e01818" stroke-width=".9"/><path d="M37.6 323.9 H40.0 M41.0 323.9 H43.0 M44.0 323.9 H46.400000000000006" stroke="#c03030" stroke-width="1.2"/><path d="M38.0 327.8 V333.0 M38.0 329.0 H43.0 V332.0 H46.400000000000006" fill="none" stroke="#222" stroke-width=".8"/><path d="M39.6 330.6 H42.2 M43.0 333.6 H45.6" stroke="#e01818" stroke-width=".9"/><path d="M37.6 336.0 H40.0 M41.0 336.0 H43.0 M44.0 336.0 H46.400000000000006" stroke="#c03030" stroke-width="1.2"/><path d="M40.2 327.6 V332.4" stroke="#e01818" stroke-width=".7"/><path d="M37.6 339.70000000000005 V348.70000000000005 H47.0" fill="none" stroke="#222" stroke-width=".8"/><path d="M38.6 344.1 H46.2 M40.2 342.5 V345.70000000000005 M43.0 342.5 V345.70000000000005 M46.0 342.5 V345.70000000000005" stroke="#3050c0" stroke-width=".8"/><path d="M37.4 352.0 H40.6 V356.59999999999997 H46.6 V359.59999999999997 H37.4 Z" fill="#e8d050" stroke="#222" stroke-width=".8"/><path d="M37.4 354.4 H40.6 M37.4 356.59999999999997 H40.6 V359.59999999999997 M43.6 356.59999999999997 V359.59999999999997" stroke="#222" stroke-width=".5"/><path d="M37.0 361.2 H47.0" stroke="#e03030" stroke-width="1" stroke-dasharray="1 .8"/><rect x="37.800000000000004" y="364.1" width="8.4" height="2" fill="#38b048" stroke="#184818" stroke-width=".6"/><rect x="39.2" y="366.1" width="5.6" height="5.2" fill="#f8f8f0" stroke="#184818" stroke-width=".7"/><rect x="37.800000000000004" y="371.3" width="8.4" height="2.2" fill="#283898" stroke="#101848" stroke-width=".5"/><rect x="37.800000000000004" y="376.2" width="8.4" height="2" fill="#38b048" stroke="#184818" stroke-width=".6"/><rect x="39.2" y="378.2" width="5.6" height="5.2" fill="#f8f8f0" stroke="#184818" stroke-width=".7"/><rect x="37.800000000000004" y="383.4" width="8.4" height="2.2" fill="#283898" stroke="#101848" stroke-width=".5"/><path d="M36.2 379.4 H47.400000000000006" stroke="#e01818" stroke-width=".9"/><rect x="41.2" y="388.1" width="5.2" height="9.8" fill="#e8c840" stroke="#5a4a10" stroke-width=".6"/><path d="M43.2 388.5 Q40.0 393.0 43.2 397.5" fill="#c0c8f0" stroke="#3040b0" stroke-width=".8"/><path d="M37.6 388.5 V397.5" stroke="#3040b0" stroke-width=".9"/><path d="M38.2 390.5 H40.6 M38.2 393.0 H40.2 M38.2 395.5 H40.6" stroke="#e01818" stroke-width=".7"/><rect x="42.2" y="400.20000000000005" width="4.4" height="9.8" fill="#f0e070" stroke="#222" stroke-width=".8"/><path d="M42.2 401.20000000000005 L38.0 405.1 L42.2 409.0" fill="#fff" stroke="#222" stroke-width=".8"/><path d="M36.2 405.1 H38.0" stroke="#222" stroke-width=".8"/><rect x="39.0" y="412.40000000000003" width="7.4" height="9.6" fill="#d8d4c0" stroke="#222" stroke-width=".9"/><rect x="40.4" y="415.0" width="4.2" height="4.2" fill="#e02020" stroke="#500" stroke-width=".5"/><path d="M36.6 415.0 H40.4 M36.6 419.20000000000005 H40.4 M37.800000000000004 413.6 V420.6" stroke="#222" stroke-width=".9"/><rect x="42.800000000000004" y="416.0" width="2.2" height="2.2" fill="#e8c840"/><path d="M37.6 424.3 V433.5 H47.0" fill="none" stroke="#222" stroke-width=".8"/><path d="M37.6 425.3 L41.0 429.7 H43.6 L45.0 431.3 H46.400000000000006" fill="none" stroke="#222" stroke-width=".7"/></svg>
</div>
<div class="a" style="left:133.5px;top:78px;width:47.5px;height:365.0px;background:transparent"></div>
<div class="a" style="left:136.4px;top:78px;width:1.0px;height:365.0px;background:#fdfdfa"></div>
<div class="a" style="left:139px;top:190px;width:40.0px;height:1.0px;background:#c9c6b6;box-shadow:0 1px 0 #fcfcf8"></div>
<div class="a" style="left:139px;top:237px;width:40.0px;height:1.0px;background:#c9c6b6;box-shadow:0 1px 0 #fcfcf8"></div>
<svg style="left:0;top:0" width="200" height="300" viewBox="0 0 200 300"><path d="M142 84.8 V98.4 H155" fill="none" stroke="#222" stroke-width=".9"/><path d="M142.6 98 Q144 87.5 153 88.2" fill="none" stroke="#3858c8" stroke-width=".9"/><rect x="160.2" y="85.2" width="14.6" height="13.4" fill="#a89a48" stroke="#5a5228" stroke-width=".7"/><rect x="161.79999999999998" y="87.4" width="11.399999999999999" height="5.6" fill="#d4d2c8" stroke="#555" stroke-width=".6"/><rect x="161.2" y="94.3" width="12.6" height="3.2" fill="#1a7a88"/><path d="M162.6 95.9 h2.2 m1.8 0 h2.2 m1.8 0 h2.2" stroke="#9ad8e0" stroke-width=".9"/><rect x="160.2" y="109" width="14.6" height="13.4" fill="#a89a48" stroke="#5a5228" stroke-width=".7"/><rect x="161.79999999999998" y="111.2" width="11.399999999999999" height="5.6" fill="#d4d2c8" stroke="#555" stroke-width=".6"/><rect x="161.2" y="118.1" width="12.6" height="3.2" fill="#1a7a88"/><path d="M162.6 119.7 h2.2 m1.8 0 h2.2 m1.8 0 h2.2" stroke="#9ad8e0" stroke-width=".9"/><rect x="160.2" y="129" width="14.6" height="13.4" fill="#a89a48" stroke="#5a5228" stroke-width=".7"/><rect x="161.79999999999998" y="131.2" width="11.399999999999999" height="5.6" fill="#d4d2c8" stroke="#555" stroke-width=".6"/><rect x="161.2" y="138.1" width="12.6" height="3.2" fill="#1a7a88"/><path d="M162.6 139.7 h2.2 m1.8 0 h2.2 m1.8 0 h2.2" stroke="#9ad8e0" stroke-width=".9"/><rect x="160.2" y="172.4" width="14.6" height="13.4" fill="#a89a48" stroke="#5a5228" stroke-width=".7"/><rect x="161.79999999999998" y="174.6" width="11.399999999999999" height="5.6" fill="#d4d2c8" stroke="#555" stroke-width=".6"/><rect x="161.2" y="181.5" width="12.6" height="3.2" fill="#1a7a88"/><path d="M162.6 183.1 h2.2 m1.8 0 h2.2 m1.8 0 h2.2" stroke="#9ad8e0" stroke-width=".9"/><path d="M145.4 110.6 H152.8 V112.6 H150.4 Q149.5 116.1 150.4 119.6 H152.8 V121.6 H145.4 V119.6 H147.8 Q148.7 116.1 147.8 112.6 H145.4 Z" fill="#e8a838" stroke="#5a3a10" stroke-width=".7"/><path d="M149 107.6 V110 M147.8 108.8 H150.2 M153.4 116 H156 M154.7 114.8 V117.2" stroke="#e01818" stroke-width=".8"/><path d="M140.6 130.4 H146.6 V132.4 H144.7 Q143.9 135.4 144.7 138.4 H146.6 V140.4 H140.6 V138.4 H142.5 Q143.3 135.4 142.5 132.4 H140.6 Z" fill="#e8a838" stroke="#5a3a10" stroke-width=".7"/><path d="M146.4 135.4 H149.2 M147.8 134 V136.8" stroke="#e01818" stroke-width=".8"/><path d="M150.6 130.4 H153.4 V137.6 H156.2 V140.6 H150.6 Z" fill="#20c040" stroke="#082808" stroke-width="1"/><path d="M143.6 150.4 L155.6 163.4" stroke="#222" stroke-width=".7" stroke-dasharray="1.4 1"/><path d="M145.4 152.6 V149.8 M148 155.4 V152.6 M151 158.6 L153 156.6 M145 153 L143.4 151.4" stroke="#e01818" stroke-width=".8"/><circle cx="145.4" cy="152.8" r=".9" fill="#e01818"/><circle cx="148" cy="155.6" r=".9" fill="#e01818"/><circle cx="150.8" cy="158.6" r=".9" fill="#e01818"/><rect x="155.4" y="162.6" width="1.6" height="1.6" fill="#111"/><rect x="142" y="173.6" width="11.4" height="11" fill="#f8d060" stroke="#e01818" stroke-width=".9"/><rect x="144.6" y="176.2" width="6.2" height="5.8" fill="#fff" stroke="#e01818" stroke-width=".8"/><path d="M147.7 171.6 V186.4 M140.4 179.2 H156" stroke="#111" stroke-width=".8"/><path d="M156.4 179.2 l-2 -1.2 v2.4 Z M147.7 171.2 l-1.2 2 h2.4Z" fill="#111"/><rect x="144.6" y="200" width="6" height="8.4" fill="#f0e888" stroke="#222" stroke-width=".8"/><rect x="141.6" y="208.2" width="12.6" height="4.6" fill="#f0e888" stroke="#222" stroke-width=".8"/><path d="M147 200.6 H152 V208" fill="none" stroke="#e01818" stroke-width=".8" stroke-dasharray="1.4 .8"/><path d="M155.6 214.4 l-2 0 l2 -2Z" fill="#111"/><rect x="162" y="201.6" width="2.8" height="5" fill="#f0e888" stroke="#222" stroke-width=".8"/><rect x="160" y="206.6" width="6.8" height="4" fill="#f0e888" stroke="#222" stroke-width=".8"/><rect x="169.6" y="206.6" width="6.6" height="4" fill="#f0e888" stroke="#222" stroke-width=".8"/><path d="M166 203.4 H170.6" stroke="#e01818" stroke-width=".9"/><path d="M171.6 203.4 l-2 -1.3 v2.6Z" fill="#e01818"/><path d="M177.4 213.4 l-2 0 l2 -2Z" fill="#111"/><rect x="141.6" y="228.6" width="12.6" height="4.8" fill="#f0e888" stroke="#222" stroke-width=".8"/><path d="M145.4 228.4 V220.4 H148" fill="none" stroke="#222" stroke-width=".8" stroke-dasharray="1.4 .8"/><path d="M147.4 224.8 L151.6 220 L154.4 222.4 L150.2 227.2 Z" fill="#e86040" stroke="#801810" stroke-width=".6"/><path d="M146.2 228.4 L147.4 224.8 L150.2 227.2 Z" fill="#f0e888" stroke="#222" stroke-width=".5"/><path d="M140.4 253 H156" stroke="#222" stroke-width=".8"/><path d="M145.4 250.6 V255.4 M143 253 H147.8" stroke="#3050d0" stroke-width=".9"/><path d="M147.6 254.4 L153.2 258 L150.8 258.4 L152.4 261 L151.2 261.6 L149.8 259 L148.2 260.6 Z" fill="#111"/><path d="M156.4 262.4 l-2 0 l2 -2Z" fill="#111"/><path d="M160.2 247.4 H165 V253.4 H175.6 V258.4 H160.2 Z" fill="#f0e888" stroke="#222" stroke-width=".8"/><circle cx="162.8" cy="255.6" r="1.1" fill="none" stroke="#e01818" stroke-width=".7"/><path d="M177.4 261.4 l-2 0 l2 -2Z" fill="#111"/><path d="M141.8 271 L145 268 H151 V280 H141.8 Z" fill="#e8c878" stroke="#5a4a10" stroke-width=".7"/><path d="M147 275 H153.6 V281 H147 Z" fill="#e89060" stroke="#801810" stroke-width=".6"/><path d="M145 268 V280 M148 268 V275" stroke="#8a6a20" stroke-width=".6"/></svg>
<div class="a" style="left:181px;top:79.2px;width:544.6px;height:363.2px;background:#000"></div>
<svg style="left:181px;top:78px" width="547" height="365" viewBox="181 78 547 365"><path d="M195 370.5 L324.6 151.3 L454.4 370.5 L583.8 151.3 L713.4 370.5 Z M324.6 151.3 H583.8" fill="none" stroke="#ececec" stroke-width="0.85"/></svg>
<div class="a" style="left:133.5px;top:442.4px;width:594.5px;height:23.6px;background:transparent;border-top:1px solid #fdfdfa"></div>
<svg style="left:143px;top:448.6px" width="11" height="12" viewBox="0 0 11 12"><path d="M0.6 5.8 L5.2 1.2 V4 H10.6 V7.6 H5.2 V10.4 Z" fill="#a9a698" stroke="#8c897c" stroke-width=".7"/></svg>
<div class="a" style="left:158px;top:447px;width:12.2px;height:14.4px;border:1px solid #4a5868;background:#fcfcfa;border-radius:1px"></div>
<svg style="left:160.2px;top:449.6px" width="8" height="9.4" viewBox="0 0 8 9.4"><path d="M.8 .8 L7.2 8.6 M7.2 .8 L.8 8.6" stroke="#d81818" stroke-width="1.3"/></svg>
<div class="a" style="left:0px;top:466px;width:728.0px;height:56.0px;background:transparent;border-top:1.5px solid #fbfaf4"></div>
<div class="a" style="left:0px;top:468.6px;width:30.0px;height:26.4px;background:#fbfbf8;border:1px solid #c4c8cc;border-right:none;border-radius:2px 0 0 2px"></div>
<div class="a" style="left:0px;top:468.6px;width:2.0px;height:26.4px;background:#eaa030;border-radius:2px 0 0 2px"></div>
<div class="a" style="left:4px;top:496px;width:24.0px;height:22.0px;background:#f5f4ec;border:1px solid #c9ccd0;border-top:none"></div>
<div class="a" style="left:27.6px;top:468.6px;width:697.4px;height:50.0px;background:#fafaf6;border:1px solid #c8ccd0;border-left:none"></div>
<div class="a" style="left:8.8px;top:475px;width:12.6px;height:13.8px;background:linear-gradient(135deg,#f6f4e8,#d4d0bc);border:1px solid #77745e"></div>
<svg style="left:7px;top:482px" width="10" height="9" viewBox="0 0 10 9"><path d="M1 7.6 L6.6 2" stroke="#8a6a10" stroke-width="2"/><path d="M1 7.6 L6.6 2" stroke="#e8c040" stroke-width="1" /><path d="M.4 8.4 l1.6 -.4 l-1.2 -1.2Z" fill="#222"/></svg>
<div class="a" style="left:8.8px;top:499.4px;width:13.6px;height:14.0px;background:linear-gradient(135deg,#f8e890,#e8c850);border:1px solid #4a462c"></div>
<svg style="left:11px;top:503.6px" width="10" height="6" viewBox="0 0 10 6"><path d="M.6 .6 L2.8 3 L.6 5.4 M3.8 .6 L6 3 L3.8 5.4 M7 .6 L9.2 3 L7 5.4" fill="none" stroke="#111" stroke-width="1"/></svg>
<div class="a" style="left:31.2px;top:473px;width:691.4px;height:42.8px;background:#fff;border:1px solid #9cb6d6"></div>
<div class="a" style="left:709.6px;top:474.6px;width:11.0px;height:39.8px;background:#fbfbf8"></div>
<div class="sb" style="left:710px;top:475.2px;width:10.2px;height:10.4px"></div>
<div class="sb" style="left:710px;top:495px;width:10.2px;height:6.6px"></div>
<div class="sb" style="left:710px;top:503.4px;width:10.2px;height:10.4px"></div>
<svg style="left:711.6px;top:478.2px" width="7" height="5" viewBox="0 0 7 5"><path d="M0.8 4.2 L3.5 1.4 L6.2 4.2" fill="none" stroke="#4d6185" stroke-width="1.5"/></svg>
<svg style="left:711.6px;top:506.4px" width="7" height="5" viewBox="0 0 7 5"><path d="M0.8 0.8 L3.5 3.6 L6.2 0.8" fill="none" stroke="#4d6185" stroke-width="1.5"/></svg>
<div class="a" style="left:712.4px;top:497px;width:5.2px;height:0.8px;background:#eef3fe;box-shadow:0 .6px 0 #9fb4ec"></div>
<div class="a" style="left:712.4px;top:499px;width:5.2px;height:0.8px;background:#eef3fe;box-shadow:0 .6px 0 #9fb4ec"></div>
<span class="a" style="left:35.5px;top:476.8px;font-family:'Liberation Mono','DejaVu Sans Mono',monospace;font-size:9.45px;line-height:10px;color:#3a3a3a">The model database has been saved to "c:\lucru\lucru_abaqus\fin_laboratoare_master_Autoliv\overhead_hoist.cae".</span>
<span class="a" style="left:35.5px;top:486.1px;font-family:'Liberation Mono','DejaVu Sans Mono',monospace;font-size:9.45px;line-height:10px;color:#3a3a3a">Please verify the validity of analysis attributes associated with this part or its instances</span>
<span class="a" style="left:35.5px;top:495.5px;font-family:'Liberation Mono','DejaVu Sans Mono',monospace;font-size:9.45px;line-height:10px;color:#3a3a3a">Please verify the validity of analysis attributes associated with this part or its instances</span>
<span class="a" style="left:35.5px;top:504.8px;font-family:'Liberation Mono','DejaVu Sans Mono',monospace;font-size:9.45px;line-height:10px;color:#3a3a3a">Please verify the validity of analysis attributes associated with this part or its instances</span>
<div class="a" style="left:0px;top:521.6px;width:728.0px;height:24.4px;background:linear-gradient(#2f6fe0 0%,#4a8cf0 8%,#3572e4 16%,#2860d8 30%,#265cd6 70%,#2254c8 90%,#1c48b4 100%)"></div>
<div class="a" style="left:0px;top:524.6px;width:68.0px;height:21.4px;background:linear-gradient(#6ab86a 0%,#3f9e42 14%,#35953a 50%,#2e8832 85%,#277a2c 100%);border-radius:0 9px 9px 0;box-shadow:1px 0 2px #193c94"></div>
<span class="t " style="left:24.7px;top:530.7px;letter-spacing:-0.433px;font-size:13.4px;font-weight:bold;font-style:italic;color:#fff;line-height:16px;height:16px;top:527.6px;text-shadow:.8px .8px 1px #1f4a1f">start</span>
<svg style="left:7.4px;top:529.6px" width="13" height="12" viewBox="0 0 13 12"><path d="M1.6 .8 Q4 -.4 6.3 1 L5.4 5 Q3.2 3.8 .7 5Z" fill="#e8582c"/><path d="M7.2 1.4 Q9.6 2.6 12.3 1 L11.4 5 Q8.8 6.4 6.3 5.3Z" fill="#82c444"/><path d="M.5 6 Q3 4.8 5.2 6 L4.3 10 Q2 8.8 -.4 10Z" fill="#4088e8"/><path d="M6.1 6.3 Q8.6 7.4 11.2 6 L10.3 10 Q7.8 11.4 5.2 10.3Z" fill="#f4c428"/></svg>
<div class="a" style="left:76px;top:528px;width:1.2px;height:1.2px;background:#163c98"></div>
<div class="a" style="left:78px;top:529.2px;width:1.2px;height:1.2px;background:#163c98"></div>
<div class="a" style="left:588px;top:528px;width:1.2px;height:1.2px;background:#163c98"></div>
<div class="a" style="left:590px;top:529.2px;width:1.2px;height:1.2px;background:#163c98"></div>
<div class="a" style="left:76px;top:530.5px;width:1.2px;height:1.2px;background:#163c98"></div>
<div class="a" style="left:78px;top:531.7px;width:1.2px;height:1.2px;background:#163c98"></div>
<div class="a" style="left:588px;top:530.5px;width:1.2px;height:1.2px;background:#163c98"></div>
<div class="a" style="left:590px;top:531.7px;width:1.2px;height:1.2px;background:#163c98"></div>
<div class="a" style="left:76px;top:533px;width:1.2px;height:1.2px;background:#163c98"></div>
<div class="a" style="left:78px;top:534.2px;width:1.2px;height:1.2px;background:#163c98"></div>
<div class="a" style="left:588px;top:533px;width:1.2px;height:1.2px;background:#163c98"></div>
<div class="a" style="left:590px;top:534.2px;width:1.2px;height:1.2px;background:#163c98"></div>
<div class="a" style="left:76px;top:535.5px;width:1.2px;height:1.2px;background:#163c98"></div>
<div class="a" style="left:78px;top:536.7px;width:1.2px;height:1.2px;background:#163c98"></div>
<div class="a" style="left:588px;top:535.5px;width:1.2px;height:1.2px;background:#163c98"></div>
<div class="a" style="left:590px;top:536.7px;width:1.2px;height:1.2px;background:#163c98"></div>
<div class="a" style="left:76px;top:538px;width:1.2px;height:1.2px;background:#163c98"></div>
<div class="a" style="left:78px;top:539.2px;width:1.2px;height:1.2px;background:#163c98"></div>
<div class="a" style="left:588px;top:538px;width:1.2px;height:1.2px;background:#163c98"></div>
<div class="a" style="left:590px;top:539.2px;width:1.2px;height:1.2px;background:#163c98"></div>
<div class="a" style="left:76px;top:540.5px;width:1.2px;height:1.2px;background:#163c98"></div>
<div class="a" style="left:78px;top:541.7px;width:1.2px;height:1.2px;background:#163c98"></div>
<div class="a" style="left:588px;top:540.5px;width:1.2px;height:1.2px;background:#163c98"></div>
<div class="a" style="left:590px;top:541.7px;width:1.2px;height:1.2px;background:#163c98"></div>
<div class="a" style="left:82.5px;top:527.4px;width:70.0px;height:16.0px;border-radius:2px;background:linear-gradient(#69a4f8 0%,#4a8af0 14%,#3f80ec 50%,#3c7ae8 85%,#3468d4 100%);box-shadow:inset 0 0 0 .6px rgba(20,60,160,.5)"></div>
<span class="t " style="left:103.8px;top:530.9px;letter-spacing:-0.094px;color:#fff"><span style="color:#f8d060">2</span> Wind...</span>
<div class="a" style="left:147.2px;top:534.6px;width:0;height:0;border-left:2px solid transparent;border-right:2px solid transparent;border-top:2.4px solid #fff"></div>
<div class="a" style="left:155px;top:527.4px;width:68.2px;height:16.0px;border-radius:2px;background:linear-gradient(#69a4f8 0%,#4a8af0 14%,#3f80ec 50%,#3c7ae8 85%,#3468d4 100%);box-shadow:inset 0 0 0 .6px rgba(20,60,160,.5)"></div>
<span class="t " style="left:174.7px;top:530.9px;letter-spacing:-0.062px;color:#fff">Microsoft...</span>
<div class="a" style="left:225.8px;top:527.4px;width:68.2px;height:16.0px;border-radius:2px;background:linear-gradient(#69a4f8 0%,#4a8af0 14%,#3f80ec 50%,#3c7ae8 85%,#3468d4 100%);box-shadow:inset 0 0 0 .6px rgba(20,60,160,.5)"></div>
<span class="t " style="left:246.3px;top:530.9px;letter-spacing:-0.426px;color:#fff">ABAQUS ...</span>
<div class="a" style="left:295.7px;top:527.4px;width:70.3px;height:16.0px;border-radius:2px;background:linear-gradient(#1c44a4 0%,#2252bc 20%,#2254c0 100%);box-shadow:inset 0 0 0 .6px #14348a"></div>
<span class="t " style="left:318.2px;top:530.9px;letter-spacing:-0.536px;color:#fff">ABAQUS...</span>
<div class="a" style="left:367.3px;top:527.4px;width:69.2px;height:16.0px;border-radius:2px;background:linear-gradient(#69a4f8 0%,#4a8af0 14%,#3f80ec 50%,#3c7ae8 85%,#3468d4 100%);box-shadow:inset 0 0 0 .6px rgba(20,60,160,.5)"></div>
<span class="t " style="left:388.0px;top:530.9px;letter-spacing:0.304px;color:#fff"><span style="color:#f8d060">2</span> Inter...</span>
<div class="a" style="left:430.8px;top:534.6px;width:0;height:0;border-left:2px solid transparent;border-right:2px solid transparent;border-top:2.4px solid #fff"></div>
<div class="a" style="left:438.5px;top:527.4px;width:68.9px;height:16.0px;border-radius:2px;background:linear-gradient(#69a4f8 0%,#4a8af0 14%,#3f80ec 50%,#3c7ae8 85%,#3468d4 100%);box-shadow:inset 0 0 0 .6px rgba(20,60,160,.5)"></div>
<span class="t " style="left:458.9px;top:530.9px;letter-spacing:-0.033px;color:#fff"><span style="color:#f8d060">2</span> Micro...</span>
<div class="a" style="left:501.6px;top:534.6px;width:0;height:0;border-left:2px solid transparent;border-right:2px solid transparent;border-top:2.4px solid #fff"></div>
<div class="a" style="left:509.4px;top:527.4px;width:69.2px;height:16.0px;border-radius:2px;background:linear-gradient(#69a4f8 0%,#4a8af0 14%,#3f80ec 50%,#3c7ae8 85%,#3468d4 100%);box-shadow:inset 0 0 0 .6px rgba(20,60,160,.5)"></div>
<span class="t " style="left:530.5px;top:530.9px;letter-spacing:-0.395px;color:#fff">Calculator</span>
<div class="a" style="left:649.4px;top:521.6px;width:78.6px;height:24.4px;background:linear-gradient(#1a78d8 0%,#38a8f4 10%,#1c94ec 20%,#1590e8 60%,#1384dc 90%,#1070c4 100%);border-left:1px solid #0e52a8"></div>
<div class="a" style="left:596.6px;top:529.4px;width:12.2px;height:12.2px;background:#3a70dc"></div>
<span class="t " style="left:597.8px;top:530.9px;letter-spacing:-2.050px;color:#fff">EN</span>
<svg style="left:0;top:0" width="728" height="546" viewBox="0 0 728 546"><path d="M90.4 531.6 H93.6 L94.6 532.8 H99.6 V540.4 H90.4 Z" fill="#f0d070" stroke="#8a6a18" stroke-width=".6"/><path d="M90.4 534 H99.6" stroke="#fff4c0" stroke-width=".7"/><rect x="161" y="530" width="10.4" height="10.8" rx="1.4" fill="#e45a30" stroke="#f8e0d0" stroke-width=".8"/><rect x="163" y="532.4" width="6.6" height="6.4" fill="#fff"/><circle cx="166.4" cy="535.6" r="2.2" fill="#e45a30"/><rect x="166.4" y="533.4" width="2.4" height="2.2" fill="#fff"/><rect x="232.4" y="530.2" width="10" height="10.6" fill="#f4f4f0"/><path d="M234 530.2 V540.8 M236.4 530.2 V540.8 M238.8 530.2 V540.8 M241 530.2 V540.8" stroke="#333" stroke-width="1"/><path d="M232.4 533.6 H242.4 M232.4 537.4 H242.4" stroke="#666" stroke-width=".5"/><rect x="303.4" y="530" width="10.6" height="10.8" fill="#f0f4fc"/><rect x="304.4" y="531" width="8.6" height="8.8" fill="#1c3a78"/><path d="M304.8 531.4 L312.6 539.4" stroke="#e4ecfa" stroke-width="1.6"/><path d="M308 531.4 H312.6 V536 Z" fill="#c9d6f0"/><circle cx="379.2" cy="535.6" r="4.4" fill="#58b0f0" stroke="#d0e8fc" stroke-width=".8"/><path d="M375.6 535.6 H382.8" stroke="#fff" stroke-width="1.3"/><path d="M373.6 538 Q379 529 385 531.6" fill="none" stroke="#f4d040" stroke-width="1"/><rect x="445.4" y="530.2" width="10.6" height="10.6" rx="1" fill="#e8ecf4" stroke="#fff" stroke-width=".5"/><rect x="447.6" y="531.8" width="7" height="7.6" fill="#2c52a8"/><path d="M448.8 533.6 L450 537.8 L451.1 534.6 L452.2 537.8 L453.4 533.6" fill="none" stroke="#fff" stroke-width=".9"/><rect x="517.8" y="529.8" width="7.8" height="11.2" rx=".8" fill="#d8dce8" stroke="#f4f6fa" stroke-width=".7"/><rect x="519" y="531" width="5.4" height="2.4" fill="#78a0d8"/><path d="M519.2 535.2 H524.4 M519.2 537 H524.4 M519.2 538.8 H524.4" stroke="#6a7088" stroke-width=".9" stroke-dasharray="1.2 .8"/><path d="M614 531.4 H623 V539 H619 L617 541 V539 H614 Z" fill="#f8f0a0" stroke="#333" stroke-width=".7"/><rect x="632.6" y="529.2" width="4.4" height="3.2" fill="none" stroke="#e8f0fc" stroke-width=".8"/><rect x="631" y="531" width="4.4" height="3.2" fill="#2860d8" stroke="#e8f0fc" stroke-width=".8"/><path d="M632 538.6 h3.6 l-1.8 2 Z" fill="#fff"/><circle cx="649.8" cy="535.2" r="6.2" fill="#3c8cf0" stroke="#b8d8fc" stroke-width=".9"/><path d="M651 532.2 L648 535.2 L651 538.2" fill="none" stroke="#fff" stroke-width="1.4"/><path d="M662.4 529.6 Q665 530.8 667.2 529.8 V535.6 Q666.4 539.4 662.4 541 Q658.4 539.4 657.8 535.6 V529.8 Q660 530.8 662.4 529.6Z" fill="#d82828" stroke="#f0d0d0" stroke-width=".5"/><path d="M660.6 533.4 L664.2 537 M664.2 533.4 L660.6 537" stroke="#fff" stroke-width="1.1"/><circle cx="675.2" cy="535.4" r="5.3" fill="#a8c838" stroke="#708818" stroke-width=".5"/><rect x="672.4" y="532.6" width="5.6" height="5.6" fill="#e8f090" stroke="#607010" stroke-width=".5"/><path d="M684.4 530.4 L689.6 537.6 L687.8 538.2 L690.6 541 L692.6 540.2 L690.4 536.8 L692.4 536.2 Z" fill="#3a3a3a" stroke="#b0b8c8" stroke-width=".5"/></svg>
<span class="t " style="left:699.4px;top:530.7px;letter-spacing:-0.291px;color:#fff">13:13</span>
<span class="t " style="left:616.6px;top:530.5px;font-size:7.5px;font-weight:bold;color:#222">?</span>
<div class="a" style="left:136px;top:279.2px;width:193.8px;height:131.2px;background:#0c50e0;border-radius:5px 5px 0 0"></div>
<div class="a" style="left:136px;top:279.2px;width:193.8px;height:19.8px;border-radius:5px 5px 0 0;background:linear-gradient(#2a6cf0 0%,#3a8cf8 8%,#1a64ec 20%,#0c54e0 50%,#0a50dc 80%,#1254d8 100%)"></div>
<div class="a" style="left:138.3px;top:298.9px;width:189.2px;height:108.9px;background:linear-gradient(90deg,#f5f3ea,#efecdf)"></div>
<div class="a" style="left:139.4px;top:285.4px;width:10.2px;height:7.4px;background:#fff;border-top:1.8px solid #b8ccf4;border-radius:.5px"></div>
<span class="t " style="left:153.9px;top:285.3px;letter-spacing:-0.198px;font-size:10px;color:#fff;line-height:12px;height:12px;top:284.3px;-webkit-text-stroke:.4px #fff">Edit Section</span>
<div class="a" style="left:311.6px;top:282.6px;width:14.4px;height:14.3px;border:1px solid #f4f4fc;border-radius:2.5px;background:linear-gradient(135deg,#f0a080,#e0623c 45%,#c8401c)"></div>
<svg style="left:314.8px;top:285.8px" width="8" height="8" viewBox="0 0 8 8"><path d="M1 1 L7 7 M7 1 L1 7" stroke="#fff" stroke-width="1.7"/></svg>
<span class="t " style="left:142.0px;top:303.8px;letter-spacing:-0.661px;">Name:</span>
<span class="t " style="left:169.6px;top:303.8px;letter-spacing:-0.390px;">FrameSection</span>
<span class="t " style="left:144.4px;top:319.0px;letter-spacing:-0.249px;">Type:</span>
<span class="t " style="left:169.6px;top:319.0px;letter-spacing:-0.409px;">Truss</span>
<div class="a" style="left:141.8px;top:332px;width:181.9px;height:1.0px;background:#bdbaab;box-shadow:0 1px 0 #fdfdfa"></div>
<span class="t " style="left:142.0px;top:339.5px;letter-spacing:-0.243px;">Material:</span>
<div class="cb" style="left:174.9px;top:336.6px;width:101.1px;height:13.799999999999955px"><div class="cbb" style="width:9.4px"></div></div>
<span class="t " style="left:177.3px;top:339.0px;letter-spacing:-0.388px;">Steel</span>
<svg style="left:266.8px;top:341.3px" width="7" height="5" viewBox="0 0 7 5"><path d="M0.8 0.8 L3.5 3.6 L6.2 0.8" fill="none" stroke="#4d6185" stroke-width="1.5"/></svg>
<div class="btn" style="left:288.2px;top:337.3px;width:35.5px;height:13px"></div>
<span class="t " style="left:289.7px;top:339.5px;letter-spacing:0.082px;">Create...</span>
<span class="t " style="left:142.0px;top:357.4px;letter-spacing:-0.244px;">Cross-sectional area:</span>
<div class="a" style="left:217.3px;top:354.4px;width:48.5px;height:14.0px;background:#fff;border:1px solid #86a2c4"></div>
<span class="t " style="left:220.7px;top:357.3px;letter-spacing:-0.184px;">19.635e-6</span>
<svg style="left:253px;top:357.6px" width="5" height="9" viewBox="0 0 5 9"><path d="M.4 .5 H1.8 Q2.5 .5 2.5 1.2 Q2.5 .5 3.2 .5 H4.6 M.4 8.5 H1.8 Q2.5 8.5 2.5 7.8 Q2.5 8.5 3.2 8.5 H4.6 M2.5 1 V8" fill="none" stroke="#000" stroke-width=".9"/></svg>
<span class="t " style="left:142.0px;top:373.5px;letter-spacing:-0.111px;">Temperature variation:</span>
<span class="t " style="left:226.7px;top:373.5px;letter-spacing:-0.184px;">Constant through thickness</span>
<div class="a" style="left:141.8px;top:386.8px;width:181.9px;height:1.0px;background:#bdbaab;box-shadow:0 1px 0 #fdfdfa"></div>
<div class="btn" style="left:167.8px;top:392px;width:35.8px;height:12.8px"></div>
<span class="t " style="left:180.2px;top:394.2px;letter-spacing:-1.203px;">OK</span>
<div class="btn" style="left:261.4px;top:392px;width:35.4px;height:12.8px"></div>
<span class="t " style="left:267.8px;top:394.2px;letter-spacing:-0.581px;">Cancel</span>
</body></html>
